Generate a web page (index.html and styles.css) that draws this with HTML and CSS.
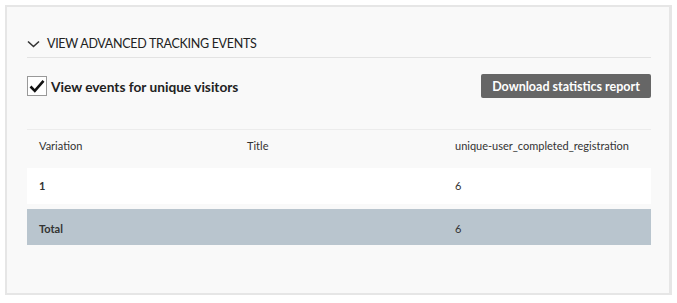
FILE: index.html
```html
<!DOCTYPE html>
<html>
<head>
    <meta charset="UTF-8">
    <title>Advanced tracking events</title>
    <link rel="stylesheet" href="styles.css">
</head>
<body>
<div class="panel">
    <div class="section-head">
        <svg class="chevron" width="13" height="8" viewBox="0 0 13 8">
            <path d="M1 1.5 L6.5 6.5 L12 1.5" fill="none" stroke="#333" stroke-width="1.6"/>
        </svg>
        <span>VIEW ADVANCED TRACKING EVENTS</span>
    </div>

    <div class="toolbar">
        <label class="check">
            <span class="box">
                <svg width="16" height="14" viewBox="0 0 16 14">
                    <path d="M1.5 7.5 L5.8 11.8 L14.5 1.8" fill="none" stroke="#111" stroke-width="2.6"/>
                </svg>
            </span>
            View events for unique visitors
        </label>
        <button class="btn">Download statistics report</button>
    </div>

    <table class="stats">
        <thead>
            <tr>
                <th>Variation</th>
                <th>Title</th>
                <th>unique-user_completed_registration</th>
            </tr>
        </thead>
        <tbody>
            <tr class="row">
                <td class="strong">1</td>
                <td></td>
                <td>6</td>
            </tr>
            <tr class="total">
                <td class="strong">Total</td>
                <td></td>
                <td>6</td>
            </tr>
        </tbody>
    </table>
</div>
</body>
</html>
```

FILE: styles.css
```css
body {
    margin: 0;
    padding: 5px;
    font-family: Lato, "Open Sans", sans-serif;
    color: #333;
    background-color: #fff;
}
.panel {
    height: 290px;
    background-color: #f9f9f9;
    border: 2px solid #e6e6e6;
    border-right-width: 3px;
    padding: 0 18px 0 20px;
    box-sizing: border-box;
}
.section-head {
    display: flex;
    align-items: center;
    gap: 7px;
    margin-top: 24px;
    height: 25px;
    border-bottom: 1px solid #e3e3e3;
    font-size: 12.5px;
    letter-spacing: -0.3px;
    color: #222;
    padding-bottom: 1px;
}
.toolbar {
    display: flex;
    justify-content: space-between;
    align-items: center;
    margin-top: 16px;
}
.check {
    display: flex;
    align-items: center;
    gap: 4px;
    font-size: 13.7px;
    font-weight: bold;
    color: #222;
}
.check .box {
    width: 18px;
    height: 18px;
    border: 1px solid #999;
    background-color: #fff;
    display: flex;
    align-items: center;
    justify-content: center;
}
.btn {
    background-color: #666;
    color: #fff;
    border: none;
    border-radius: 2px;
    font-family: inherit;
    font-size: 12.5px;
    font-weight: bold;
    height: 24px;
    width: 170px;
    padding: 0;
    cursor: pointer;
}
.stats {
    width: 100%;
    margin-top: 31px;
    border-collapse: collapse;
    font-size: 11px;
}
.stats th {
    text-align: left;
    font-weight: normal;
    vertical-align: top;
    height: 38px;
    padding: 9px 12px 0;
    box-sizing: border-box;
    border-top: 1px solid #ececec;
    width: 33.33%;
}
.stats td {
    padding: 0 12px;
    height: 36px;
}
.stats .row td {
    background-color: #fff;
    border-bottom: 1px solid #eaeaea;
}
.stats .total td {
    background-color: #b9c5ce;
    border-top: 5px solid #f9f9f9;
    padding-top: 3px;
    height: 33px;
}
.strong {
    font-weight: bold;
}
```
